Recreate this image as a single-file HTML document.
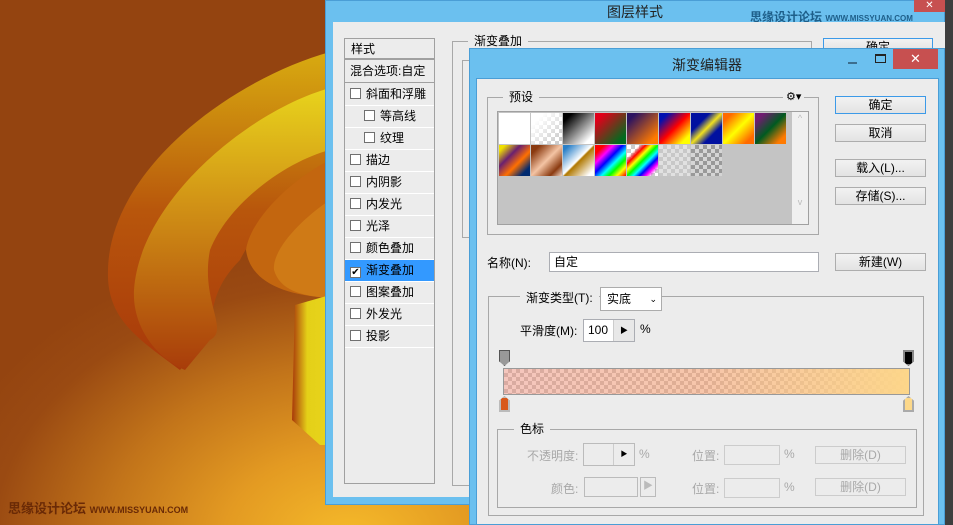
<!DOCTYPE html>
<html><head><meta charset="utf-8"><style>
*{margin:0;padding:0;box-sizing:border-box}
body{width:953px;height:525px;overflow:hidden;position:relative;font-family:"Liberation Sans","Noto Sans CJK SC",sans-serif;font-size:12px;color:#000;background:#944410}
.a{position:absolute}
.btn{position:absolute;background:linear-gradient(#f2f2f2,#e3e3e3);border:1px solid #adadad;text-align:center;font-size:12px;line-height:16px}
.row{position:absolute;left:345px;width:89px;height:22px;border-bottom:1px solid #fff;line-height:21px;font-size:12px}
.cb{display:inline-block;width:11px;height:11px;border:1px solid #707070;background:#fff;vertical-align:-1px;margin:0 5px 0 5px}
.gb{position:absolute;border:1px solid #a8a8a8}
.lbl{position:absolute;background:#ececec;padding:0 6px;font-size:12px;line-height:14px}
.sw{position:absolute;width:31px;height:31px}
.chk{background-color:#fff;background-image:linear-gradient(45deg,#ccc 25%,transparent 25%,transparent 75%,#ccc 75%),linear-gradient(45deg,#ccc 25%,transparent 25%,transparent 75%,#ccc 75%);background-size:8px 8px;background-position:0 0,4px 4px}
.dis{color:#a8a8a8}
.inp{position:absolute;background:#fff;border:1px solid #abadb3}
</style></head><body>
<!-- background art -->
<div class="a" style="left:0;top:0;width:480px;height:525px;background:radial-gradient(ellipse 420px 300px at 350px 540px,#f6bb2a 0%,#e39a22 30%,#c2741a 58%,#9a4a12 85%,#944410 100%)"></div>
<svg class="a" style="left:0;top:0" width="330" height="525">
<defs>
<linearGradient id="g1" x1="0" y1="0" x2="0" y2="1"><stop offset="0" stop-color="#d8ab10"/><stop offset=".5" stop-color="#b8560c"/><stop offset="1" stop-color="#a8380a"/></linearGradient>
<linearGradient id="g2" x1="0" y1="0" x2="0" y2="1"><stop offset="0" stop-color="#e8d41c"/><stop offset=".4" stop-color="#d29416"/><stop offset="1" stop-color="#a83c0a"/></linearGradient>
<linearGradient id="g3" x1="0" y1="0" x2="1" y2="0"><stop offset="0" stop-color="#a8380a"/><stop offset=".4" stop-color="#e4d018"/><stop offset="1" stop-color="#e8d41c"/></linearGradient>
</defs>
<path d="M330 52 C230 80 110 170 108 270 C106 320 140 340 180 370 L200 345 C220 330 200 300 240 260 C260 220 300 180 330 160Z" fill="url(#g1)"/>
<path d="M330 88 C250 110 140 200 134 290 C132 330 160 360 185 370 L210 340 C230 330 200 300 210 250 C230 200 290 160 330 150Z" fill="url(#g2)"/>
<path d="M330 160 C290 180 250 220 246 250 C250 280 280 295 330 298Z" fill="#c3660f"/>
<path d="M330 200 C300 220 272 250 274 270 C280 290 300 296 330 298Z" fill="#cf7a16"/>
<path d="M295 305 L330 295 L330 445 L320 445 L292 420Z" fill="url(#g3)"/>
</svg>
<div class="a" style="left:8px;top:498px;font-size:13px;color:#6a2a06;font-weight:bold">思缘设计论坛 <span style="font-size:9px;letter-spacing:0">WWW.MISSYUAN.COM</span></div>

<div class="a" style="left:945px;top:0;width:8px;height:525px;background:#3e3e3e"></div>
<div class="a" style="left:325px;top:0;width:620px;height:505px;background:#6bc0ef;border:1px solid #4a9ed6"></div>
<div class="a" style="left:325px;width:620px;top:2px;text-align:center;font-size:14px;color:#222">图层样式</div>
<div class="a" style="left:914px;top:0;width:31px;height:12px;background:#c75050;color:#fff;text-align:center;font-size:10px;line-height:11px">✕</div>
<div class="a" style="left:750px;top:8px;font-size:12px;color:#1e5f8a;font-weight:bold">思缘设计论坛 <span style="font-size:8px">WWW.MISSYUAN.COM</span></div>
<div class="a" style="left:333px;top:22px;width:612px;height:475px;background:#ececec"></div>
<div class="a" style="left:344px;top:38px;width:91px;height:446px;border:1px solid #a0a0a0;background:#ececec"></div>
<div class="row" style="top:39px;height:21px;padding-left:6px;border-bottom:2px solid #a0a0a0">样式</div>
<div class="row" style="top:61px;padding-left:5px;border-bottom:1px solid #a0a0a0">混合选项:自定</div>
<div class="row" style="top:84px"><span class="cb"></span>斜面和浮雕</div>
<div class="row" style="top:106px;padding-left:14px"><span class="cb"></span>等高线</div>
<div class="row" style="top:128px;padding-left:14px"><span class="cb"></span>纹理</div>
<div class="row" style="top:150px"><span class="cb"></span>描边</div>
<div class="row" style="top:172px"><span class="cb"></span>内阴影</div>
<div class="row" style="top:194px"><span class="cb"></span>内发光</div>
<div class="row" style="top:216px"><span class="cb"></span>光泽</div>
<div class="row" style="top:238px"><span class="cb"></span>颜色叠加</div>
<div class="row" style="top:260px;background:#3399ff"><span class="cb" style="font-size:10px;line-height:9px;text-align:center">✔</span>渐变叠加</div>
<div class="row" style="top:282px"><span class="cb"></span>图案叠加</div>
<div class="row" style="top:304px"><span class="cb"></span>外发光</div>
<div class="row" style="top:326px"><span class="cb"></span>投影</div>
<div class="gb" style="left:452px;top:41px;width:360px;height:445px"></div>
<div class="lbl" style="left:468px;top:34px">渐变叠加</div>
<div class="gb" style="left:462px;top:60px;width:20px;height:178px"></div>
<div class="btn" style="left:823px;top:38px;width:110px;height:14px;border-color:#3c9ae8">确定</div>

<div class="a" style="left:469px;top:48px;width:476px;height:477px;background:#6bc0ef;border:1px solid #4a9ed6"></div>
<div class="a" style="left:469px;top:55px;width:476px;text-align:center;font-size:14px;color:#222">渐变编辑器</div>
<div class="a" style="left:848px;top:62px;width:9px;height:2px;background:#3c6e8e"></div>
<div class="a" style="left:875px;top:54px;width:11px;height:9px;border:1px solid #222;border-top-width:2px"></div>
<div class="a" style="left:893px;top:49px;width:45px;height:20px;background:#c75050;color:#fff;text-align:center;font-size:13px;line-height:20px">✕</div>
<div class="a" style="left:476px;top:78px;width:463px;height:447px;background:#ececec;border:1px solid #4a9ed6"></div>

<div class="gb" style="left:487px;top:97px;width:332px;height:138px"></div>
<div class="lbl" style="left:503px;top:90px">预设</div>
<div class="lbl" style="left:783px;top:90px;padding:0 3px;font-size:11px">⚙▾</div>
<div class="a" style="left:497px;top:111px;width:312px;height:114px;background:#c4c4c4;border:1px solid #a0a0a0"></div>
<div class="a" style="left:792px;top:112px;width:16px;height:112px;background:#f0f0f0;color:#bbb;font-size:9px;text-align:center;line-height:12px">^<br><br><br><br><br><br><br>v</div>
<div class="sw" style="left:499px;top:113px;background:#fff"></div>
<div class="sw chk" style="left:531px;top:113px"></div>
<div class="sw chk" style="left:531px;top:113px;background:linear-gradient(135deg,#fff 20%,rgba(255,255,255,0) 90%)"></div>
<div class="sw" style="left:563px;top:113px;background:linear-gradient(135deg,#000 15%,#fff 85%)"></div>
<div class="sw" style="left:595px;top:113px;background:linear-gradient(135deg,#e0001a 15%,#006b1e 85%)"></div>
<div class="sw" style="left:627px;top:113px;background:linear-gradient(135deg,#2c1360 15%,#ff7a00 85%)"></div>
<div class="sw" style="left:659px;top:113px;background:linear-gradient(135deg,#0010b0 15%,#ff0000 50%,#ffff00 85%)"></div>
<div class="sw" style="left:691px;top:113px;background:linear-gradient(135deg,#0010a0 30%,#f0e020 50%,#0010a0 70%)"></div>
<div class="sw" style="left:723px;top:113px;background:linear-gradient(135deg,#ff6a00 15%,#ffff00 50%,#ff6a00 85%)"></div>
<div class="sw" style="left:755px;top:113px;background:linear-gradient(135deg,#701c70 15%,#005a20 50%,#ff7a00 85%)"></div>
<div class="sw" style="left:499px;top:145px;background:linear-gradient(135deg,#f0e000 10%,#6a2070 35%,#ff7000 60%,#002a70 85%)"></div>
<div class="sw" style="left:531px;top:145px;background:linear-gradient(135deg,#8a3a10 15%,#f4c4a4 50%,#8a3a10 80%,#f0d8c8)"></div>
<div class="sw" style="left:563px;top:145px;background:linear-gradient(135deg,#2a80c8 10%,#fff 48%,#b07800 52%,#fff 90%)"></div>
<div class="sw" style="left:595px;top:145px;background:linear-gradient(135deg,#f00 15%,#f0f 30%,#00f 45%,#0ff 60%,#0f0 72%,#ff0 85%,#f00)"></div>
<div class="sw chk" style="left:627px;top:145px"></div>
<div class="sw" style="left:627px;top:145px;background:linear-gradient(135deg,transparent 20%,#f00 30%,#ff0 40%,#0f0 50%,#0ff 60%,#00f 70%,#f0f 80%,transparent 90%)"></div>
<div class="sw chk" style="left:659px;top:145px;opacity:.5"></div>
<div class="sw chk" style="left:691px;top:145px;background-color:#ddd;background-image:linear-gradient(45deg,#888 25%,transparent 25%,transparent 75%,#888 75%),linear-gradient(45deg,#888 25%,transparent 25%,transparent 75%,#888 75%);opacity:.7"></div>

<div class="btn" style="left:835px;top:96px;width:91px;height:18px;border-color:#3c9ae8">确定</div>
<div class="btn" style="left:835px;top:124px;width:91px;height:18px">取消</div>
<div class="btn" style="left:835px;top:159px;width:91px;height:18px">载入(L)...</div>
<div class="btn" style="left:835px;top:187px;width:91px;height:18px">存储(S)...</div>
<div class="btn" style="left:835px;top:253px;width:91px;height:18px">新建(W)</div>

<div class="a" style="left:487px;top:254px">名称(N):</div>
<div class="inp" style="left:549px;top:252px;width:270px;height:20px;padding-left:4px;line-height:18px">自定</div>

<div class="gb" style="left:488px;top:296px;width:436px;height:220px"></div>
<div class="lbl" style="left:520px;top:291px">渐变类型(T):</div>
<div class="a" style="left:600px;top:287px;width:62px;height:24px;background:#fff;border:1px solid #acacac;padding-left:6px;line-height:22px">实底<span style="position:absolute;right:4px;font-size:9px">⌄</span></div>
<div class="a" style="left:520px;top:322px">平滑度(M):</div>
<div class="inp" style="left:583px;top:319px;width:52px;height:23px;line-height:21px;padding-left:4px">100</div>
<div class="a" style="left:613px;top:320px;width:21px;height:21px;background:#e8e8e8;border-left:1px solid #ccc;font-size:8px;text-align:center;line-height:21px">▶</div>
<div class="a" style="left:640px;top:322px">%</div>

<div class="a" style="left:499px;top:350px;width:11px;height:16px;background:#999;border:1px solid #555;clip-path:polygon(0 0,100% 0,100% 70%,50% 100%,0 70%)"></div>
<div class="a" style="left:903px;top:350px;width:11px;height:16px;background:#000;border:2px solid #888;clip-path:polygon(0 0,100% 0,100% 70%,50% 100%,0 70%)"></div>
<div class="a chk" style="left:503px;top:368px;width:407px;height:27px;border:1px solid #999"></div>
<div class="a" style="left:504px;top:369px;width:405px;height:25px;background:linear-gradient(90deg,rgba(232,130,110,.45),rgba(240,150,100,.55) 50%,#fdd68a)"></div>
<div class="a" style="left:499px;top:396px;width:11px;height:16px;background:#d8581a;border:2px solid #bbb;clip-path:polygon(50% 0,100% 30%,100% 100%,0 100%,0 30%)"></div>
<div class="a" style="left:903px;top:396px;width:11px;height:16px;background:#fcd88a;border:2px solid #aaa;clip-path:polygon(50% 0,100% 30%,100% 100%,0 100%,0 30%)"></div>

<div class="gb" style="left:497px;top:429px;width:420px;height:79px"></div>
<div class="lbl" style="left:514px;top:422px">色标</div>
<div class="a dis" style="left:527px;top:447px">不透明度:</div>
<div class="a" style="left:583px;top:443px;width:52px;height:23px;border:1px solid #bbb;background:#ececec"></div>
<div class="a" style="left:613px;top:444px;width:21px;height:21px;border-left:1px solid #ccc;font-size:7px;text-align:center;line-height:21px">▶</div>
<div class="a dis" style="left:639px;top:447px">%</div>
<div class="a dis" style="left:692px;top:447px">位置:</div>
<div class="a" style="left:724px;top:445px;width:56px;height:20px;border:1px solid #ccc;background:#ececec"></div>
<div class="a dis" style="left:784px;top:447px">%</div>
<div class="btn dis" style="left:815px;top:446px;width:91px;height:18px;border-color:#ccc;background:#ececec">删除(D)</div>
<div class="a dis" style="left:551px;top:480px">颜色:</div>
<div class="a" style="left:584px;top:477px;width:54px;height:20px;border:1px solid #bbb;background:#ececec"></div>
<div class="a" style="left:640px;top:477px;width:16px;height:20px;border:1px solid #bbb;color:#bbb;font-size:10px;text-align:center;line-height:18px">▶</div>
<div class="a dis" style="left:692px;top:480px">位置:</div>
<div class="a" style="left:724px;top:478px;width:56px;height:20px;border:1px solid #ccc;background:#ececec"></div>
<div class="a dis" style="left:784px;top:480px">%</div>
<div class="btn dis" style="left:815px;top:478px;width:91px;height:18px;border-color:#ccc;background:#ececec">删除(D)</div>
</body></html>
